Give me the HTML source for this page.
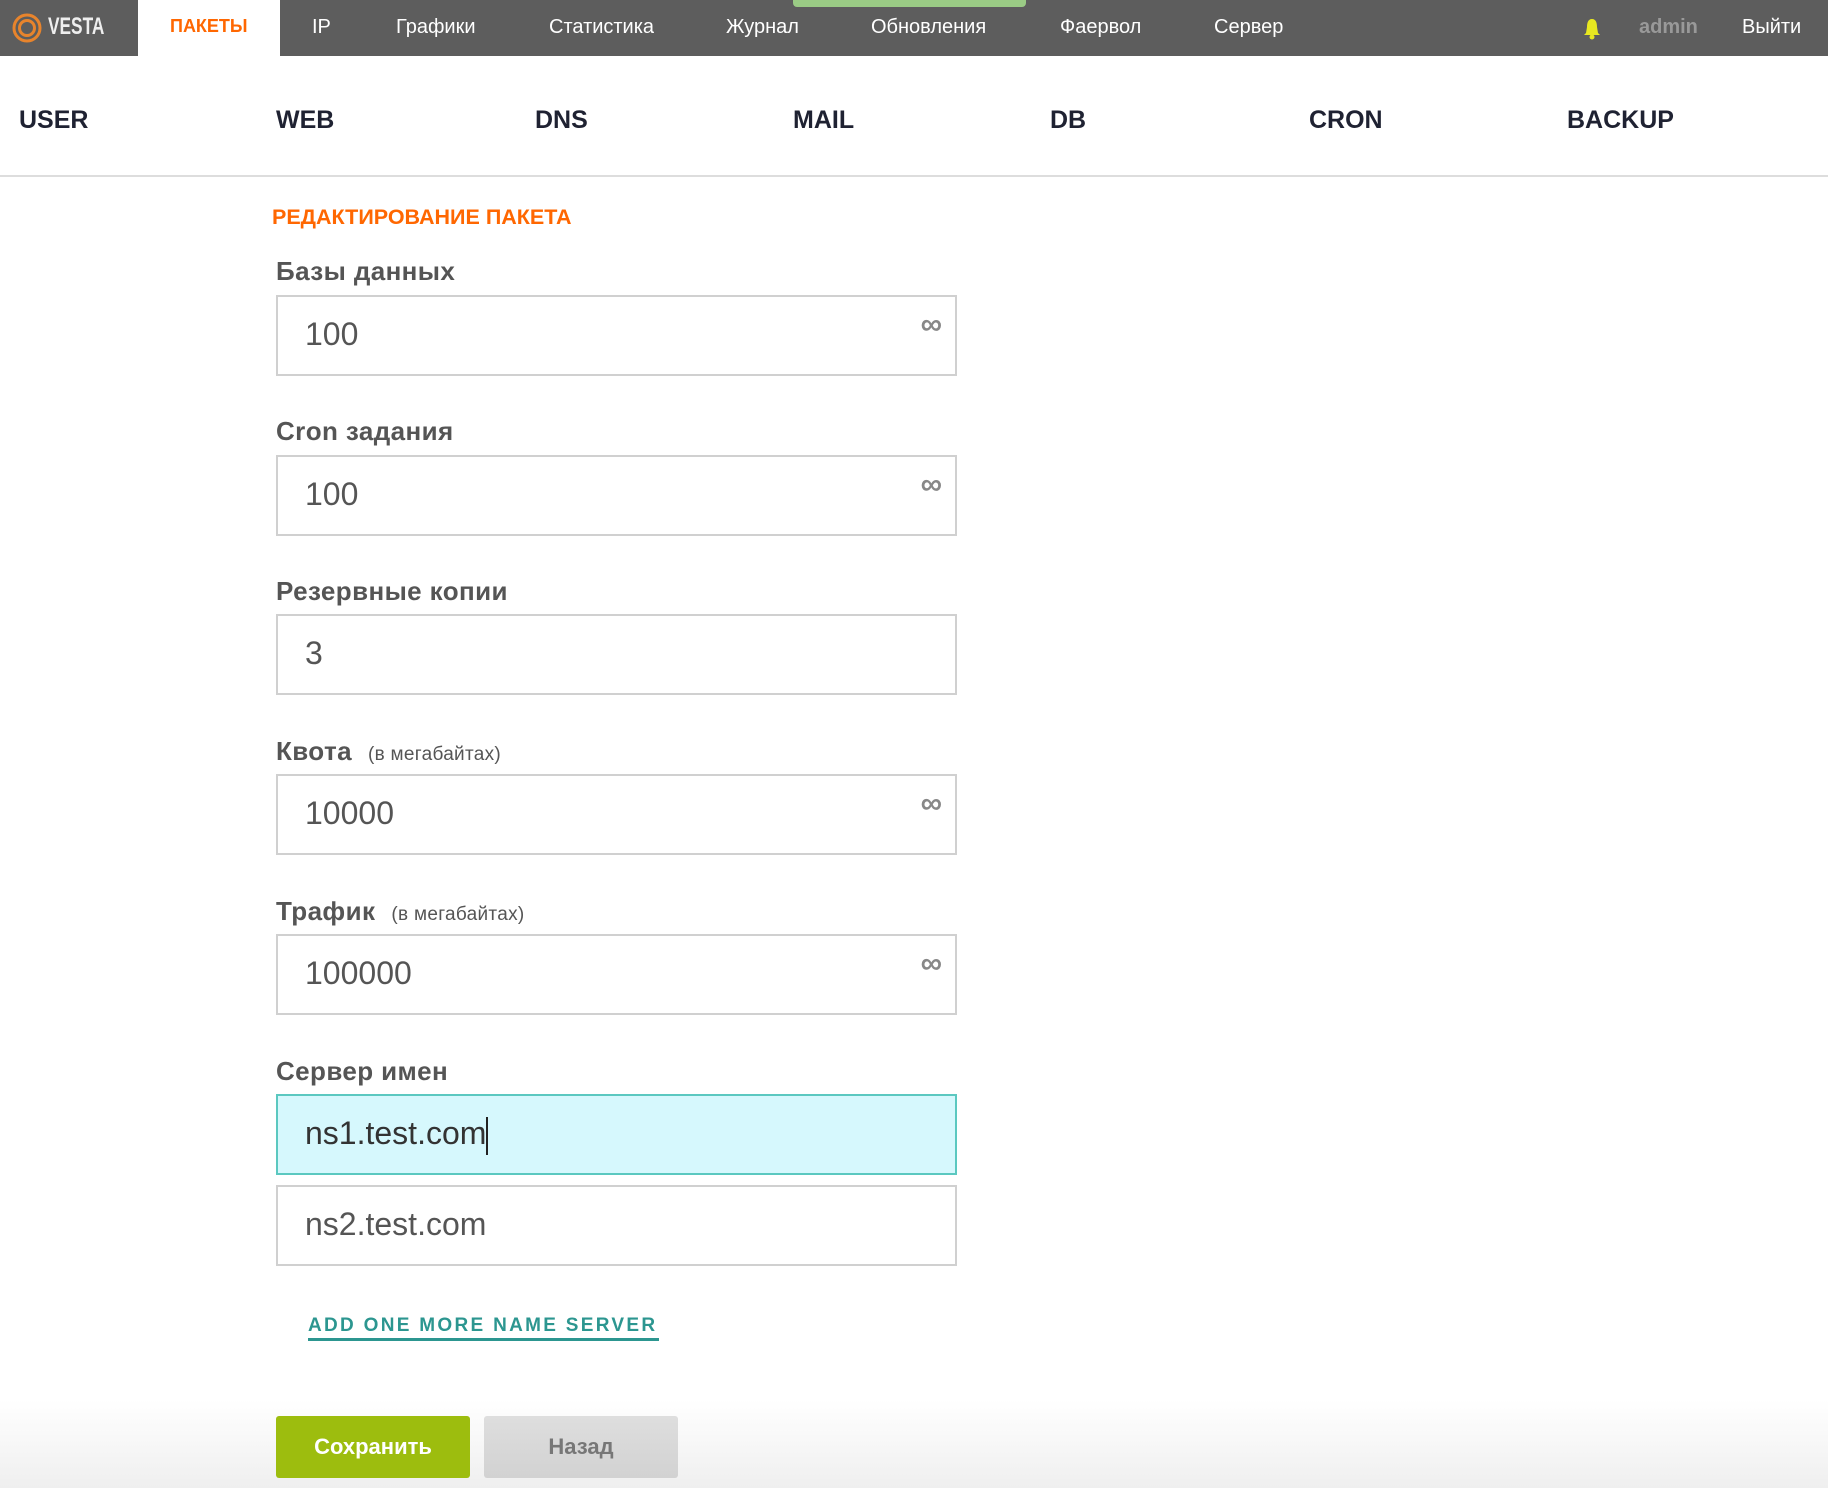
<!DOCTYPE html>
<html><head><meta charset="utf-8"><style>
*{margin:0;padding:0;box-sizing:border-box}
body{width:1828px;height:1488px;position:relative;overflow:hidden;font-family:"Liberation Sans",sans-serif;background:linear-gradient(#fff 0,#fff 1400px,#efefef 1488px)}
.a{position:absolute;white-space:nowrap}
.top{position:absolute;left:0;top:0;width:1828px;height:56px;background:#5d5d5d}
.tn{position:absolute;top:16px;font-size:20px;color:#fff}
.sn{position:absolute;top:106px;font-size:25px;font-weight:bold;color:#1f2232}
.lbl{position:absolute;left:276px;font-size:26px;font-weight:bold;color:#555;letter-spacing:0.4px}
.lbl small{font-size:19px;font-weight:normal;margin-left:16px;letter-spacing:0.3px}
.inp{position:absolute;left:276px;width:681px;height:81px;border:2px solid #d0d0d0;background:#fff;font-size:32px;color:#555;padding-left:27px;line-height:75px}
.inf{position:absolute;right:13px;top:-10px;font-size:30px;color:#888;font-weight:bold}
</style></head><body>
<div class="top"></div>
<svg class="a" style="left:10px;top:12px" width="34" height="32" viewBox="0 0 34 32"><circle cx="17" cy="16" r="13" fill="none" stroke="#e8842c" stroke-width="3"/><circle cx="17" cy="16" r="7.5" fill="none" stroke="#e8842c" stroke-width="3"/></svg>
<div class="a" style="left:48px;top:13px;font-size:24px;color:#eee;font-weight:bold;transform:scaleX(.72);transform-origin:left">VESTA</div>
<div class="a" style="left:138px;top:0;width:142px;height:56px;background:#fff"></div>
<div class="a" style="left:170px;top:16px;font-size:18px;color:#ff6701;font-weight:bold">ПАКЕТЫ</div>
<div class="a" style="left:793px;top:0;width:233px;height:7px;background:#9acb85;border-radius:0 0 4px 4px"></div>
<div class="tn" style="left:312px">IP</div>
<div class="tn" style="left:396px">Графики</div>
<div class="tn" style="left:549px">Статистика</div>
<div class="tn" style="left:726px">Журнал</div>
<div class="tn" style="left:871px">Обновления</div>
<div class="tn" style="left:1060px">Фаервол</div>
<div class="tn" style="left:1214px">Сервер</div>
<svg class="a" style="left:1583px;top:18px" width="18" height="22" viewBox="0 0 18 22"><path d="M9 1C5 1 4 5 4 9L3 15 1 17H17L15 15 14 9C14 5 13 1 9 1Z" fill="#e8e820"/><circle cx="9" cy="19" r="2.5" fill="#e8e820"/></svg>
<div class="tn" style="left:1639px;color:#999;font-weight:bold">admin</div>
<div class="tn" style="left:1742px">Выйти</div>

<div class="sn" style="left:19px">USER</div>
<div class="sn" style="left:276px">WEB</div>
<div class="sn" style="left:535px">DNS</div>
<div class="sn" style="left:793px">MAIL</div>
<div class="sn" style="left:1050px">DB</div>
<div class="sn" style="left:1309px">CRON</div>
<div class="sn" style="left:1567px">BACKUP</div>
<div class="a" style="left:0;top:175px;width:1828px;height:2px;background:#ddd"></div>

<div class="a" style="left:272px;top:205px;font-size:21.5px;font-weight:bold;color:#ff6701">РЕДАКТИРОВАНИЕ ПАКЕТА</div>

<div class="lbl" style="top:256px">Базы данных</div>
<div class="inp" style="top:295px">100<span class="inf">∞</span></div>
<div class="lbl" style="top:416px">Cron задания</div>
<div class="inp" style="top:455px">100<span class="inf">∞</span></div>
<div class="lbl" style="top:576px">Резервные копии</div>
<div class="inp" style="top:614px">3</div>
<div class="lbl" style="top:736px">Квота<small>(в мегабайтах)</small></div>
<div class="inp" style="top:774px">10000<span class="inf">∞</span></div>
<div class="lbl" style="top:896px">Трафик<small>(в мегабайтах)</small></div>
<div class="inp" style="top:934px">100000<span class="inf">∞</span></div>
<div class="lbl" style="top:1056px">Сервер имен</div>
<div class="inp" style="top:1094px;background:#d6f8fd;border-color:#5bc8c0;color:#333">ns1.test.com<span style="display:inline-block;width:2px;height:38px;background:#222;vertical-align:middle"></span></div>
<div class="inp" style="top:1185px">ns2.test.com</div>

<div class="a" style="left:308px;top:1315px;font-size:19px;font-weight:bold;color:#2c9690;letter-spacing:2.3px;border-bottom:3px solid #2c9690;padding:0 2px 1px 0">ADD ONE MORE NAME SERVER</div>

<div class="a" style="left:276px;top:1416px;width:194px;height:62px;background:#9dbd0e;border-radius:3px;color:#fff;font-size:22px;font-weight:bold;text-align:center;line-height:62px">Сохранить</div>
<div class="a" style="left:484px;top:1416px;width:194px;height:62px;background:linear-gradient(#dedede,#d2d2d2);border-radius:3px;color:#777;font-size:22px;font-weight:bold;text-align:center;line-height:62px">Назад</div>
</body></html>
